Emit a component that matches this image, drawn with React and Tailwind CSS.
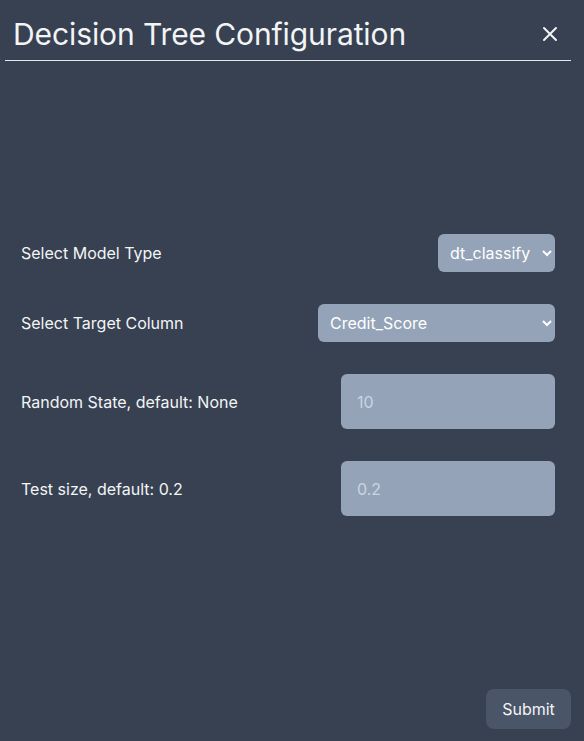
import React, { useState } from "react";

function ConfigPage() {
  const [modelType, setModelType] = useState("dt_classify");
  const [target, setTarget] = useState("Credit_Score");
  const [randomState, setRandomState] = useState("");
  const [testSize, setTestSize] = useState("");

  return (
    <div
      className="h-[741px] flex flex-col bg-[#374151] text-gray-100"
      style={{ fontFamily: "Inter, 'Noto Sans', sans-serif" }}
    >
      <div className="ml-[5px] mr-[13px] border-b border-gray-200 flex items-center justify-between pl-2 pr-[13px] pt-4 pb-2">
        <h1 className="text-3xl leading-9 text-gray-100 tracking-[-0.1px]">Decision Tree Configuration</h1>
        <button className="text-gray-100">
          <svg width="16" height="16" viewBox="0 0 16 16" fill="none" stroke="currentColor" strokeWidth="2" strokeLinecap="round">
            <path d="M2 2L14 14M14 2L2 14" />
          </svg>
        </button>
      </div>

      <div className="flex-1 flex flex-col justify-center pl-[21px] pr-[29px]">
        <div className="flex flex-col gap-8">
          <div className="flex items-center justify-between">
            <label className="text-base">Select Model Type</label>
            <select
              value={modelType}
              onChange={(e) => setModelType(e.target.value)}
              className="h-[38px] w-[117px] rounded-md bg-[#94a3b8] text-white pl-2 pr-1 text-base"
            >
              <option value="dt_classify">dt_classify</option>
              <option value="dt_regress">dt_regress</option>
            </select>
          </div>
          <div className="flex items-center justify-between">
            <label className="text-base">Select Target Column</label>
            <select
              value={target}
              onChange={(e) => setTarget(e.target.value)}
              className="h-[38px] w-[237px] rounded-md bg-[#94a3b8] text-white pl-2 pr-1 text-base"
            >
              <option value="Credit_Score">Credit_Score</option>
            </select>
          </div>
          <div className="flex items-center justify-between">
            <label className="text-base">Random State, default: None</label>
            <input
              type="text"
              placeholder="10"
              value={randomState}
              onChange={(e) => setRandomState(e.target.value)}
              className="h-[55px] w-[214px] rounded-md bg-[#94a3b8] px-4 text-base text-white placeholder:text-[#cbd5e1] outline-none"
            />
          </div>
          <div className="flex items-center justify-between">
            <label className="text-base">Test size, default: 0.2</label>
            <input
              type="text"
              placeholder="0.2"
              value={testSize}
              onChange={(e) => setTestSize(e.target.value)}
              className="h-[55px] w-[214px] rounded-md bg-[#94a3b8] px-4 text-base text-white placeholder:text-[#cbd5e1] outline-none"
            />
          </div>
        </div>
      </div>

      <div className="flex justify-end pr-[13px] pb-3">
        <button className="h-10 w-[85px] rounded-lg bg-[#4a5568] text-base text-gray-100">
          Submit
        </button>
      </div>
    </div>
  );
}

export default function App() {
  return <ConfigPage />;
}
